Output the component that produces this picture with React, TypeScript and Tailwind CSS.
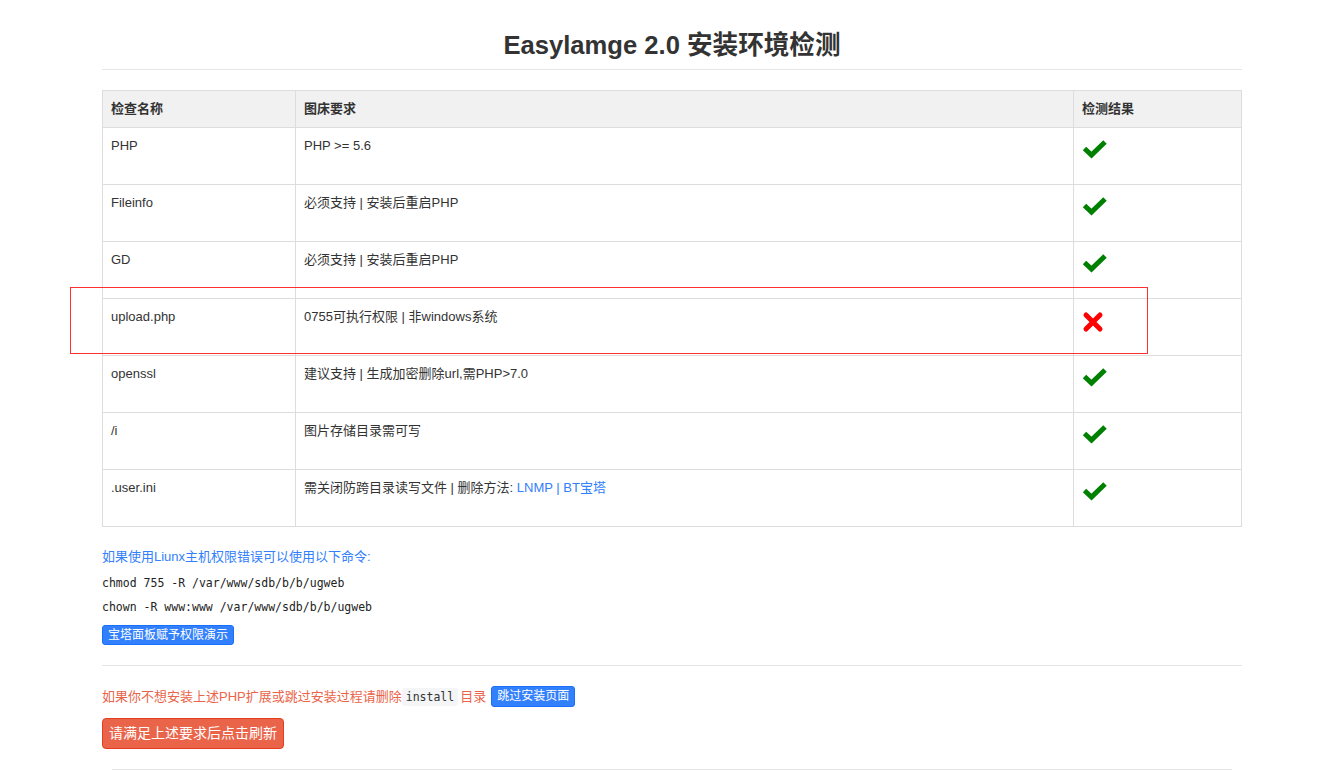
import React from 'react';

const rows = [
  { name: 'PHP', req: 'PHP >= 5.6', ok: true },
  { name: 'Fileinfo', req: '必须支持 | 安装后重启PHP', ok: true },
  { name: 'GD', req: '必须支持 | 安装后重启PHP', ok: true },
  { name: 'upload.php', req: '0755可执行权限 | 非windows系统', ok: false },
  { name: 'openssl', req: '建议支持 | 生成加密删除url,需PHP>7.0', ok: true },
  { name: '/i', req: '图片存储目录需可写', ok: true },
  { name: '.user.ini', req: 'links', ok: true },
];

function Check() {
  return (
    <svg width="26" height="20" viewBox="0 0 26 20">
      <path d="M2.5 9.5 L9.5 16 L23 3" fill="none" stroke="#008000" strokeWidth="5" strokeLinejoin="miter" />
    </svg>
  );
}

function Cross() {
  return (
    <svg width="22" height="22" viewBox="0 0 22 22">
      <path d="M4 4 L18 18 M18 4 L4 18" fill="none" stroke="#ff0000" strokeWidth="5" strokeLinecap="round" />
    </svg>
  );
}

const mono = { fontFamily: '"DejaVu Sans Mono", monospace' };

export default function App() {
  const font = { fontFamily: '"Liberation Sans", "Noto Sans CJK SC", sans-serif' };
  return (
    <div className="relative min-h-screen bg-white text-[#333] text-[13px]" style={font}>
      <div className="w-[1140px] ml-[102px]">
        {/* Title */}
        <div className="pt-[21px] border-b border-[#e5e5e5]">
          <h1 className="text-center text-[25.6px] font-bold leading-[48px] text-[#333]">Easylamge 2.0 安装环境检测</h1>
        </div>

        {/* Table */}
        <table className="mt-[20px] w-full border-collapse border border-[#ddd]">
          <thead>
            <tr className="bg-[#f1f1f1] h-[37px]">
              <th className="w-[193px] border border-[#ddd] px-[8px] text-left font-bold">检查名称</th>
              <th className="border border-[#ddd] px-[8px] text-left font-bold">图床要求</th>
              <th className="w-[168px] border border-[#ddd] px-[8px] text-left font-bold">检测结果</th>
            </tr>
          </thead>
          <tbody>
            {rows.map((r) => (
              <tr key={r.name} className="h-[57px]">
                <td className="border border-[#ddd] px-[8px] pt-[8px] align-top leading-[20px]">{r.name}</td>
                <td className="border border-[#ddd] px-[8px] pt-[8px] align-top leading-[20px]">
                  {r.req === 'links' ? (
                    <>
                      需关闭防跨目录读写文件 | 删除方法: <span className="text-[#3280fc]">LNMP</span>{' '}
                      <span className="text-[#3280fc]">|</span> <span className="text-[#3280fc]">BT宝塔</span>
                    </>
                  ) : (
                    r.req
                  )}
                </td>
                <td className="border border-[#ddd] px-[8px] pt-[11px] align-top">
                  {r.ok ? <Check /> : <div className="pt-[1px]"><Cross /></div>}
                </td>
              </tr>
            ))}
          </tbody>
        </table>

        {/* Linux commands */}
        <p className="mt-[20px] leading-[20px] text-[#3280fc]">如果使用Liunx主机权限错误可以使用以下命令:</p>
        <p className="mt-[6px] leading-[20px] text-[11.5px] text-[#222]" style={mono}>
          chmod 755 -R /var/www/sdb/b/b/ugweb
        </p>
        <p className="mt-[4px] leading-[20px] text-[11.5px] text-[#222]" style={mono}>
          chown -R www:www /var/www/sdb/b/b/ugweb
        </p>
        <div className="mt-[8px] flex">
          <button className="h-[20px] px-[5px] rounded-[3px] bg-[#3280fc] border border-[#1970fc] text-white text-[12px] leading-[18px]">
            宝塔面板赋予权限演示
          </button>
        </div>

        <div className="mt-[20px] border-t border-[#e5e5e5]" />

        {/* Skip install */}
        <div className="mt-[20px] flex items-center h-[21px] text-[#ea644a]">
          <span>如果你不想安装上述PHP扩展或跳过安装过程请删除</span>
          <code className="px-[4px] py-[2px] rounded-[3px] bg-[#f4f5f6] text-[#333] text-[11.5px] leading-[14px]" style={mono}>
            install
          </code>
          <span className="ml-[2px]">目录</span>
          <button className="ml-[5px] h-[21px] px-[5px] rounded-[3px] bg-[#3280fc] border border-[#1970fc] text-white text-[12px] leading-[19px]">
            跳过安装页面
          </button>
        </div>

        <div className="mt-[11px] flex">
          <button className="h-[31px] w-[182px] rounded-[4px] bg-[#ea644a] border border-[#e53d1c] text-white text-[14px]">
            请满足上述要求后点击刷新
          </button>
        </div>

        <div className="mt-[20px] mx-[10px] border-t border-[#e5e5e5]" />
      </div>

      {/* annotation box */}
      <div className="absolute left-[70px] top-[287px] w-[1078px] h-[67px] border border-[#ff3030] pointer-events-none" />
    </div>
  );
}
